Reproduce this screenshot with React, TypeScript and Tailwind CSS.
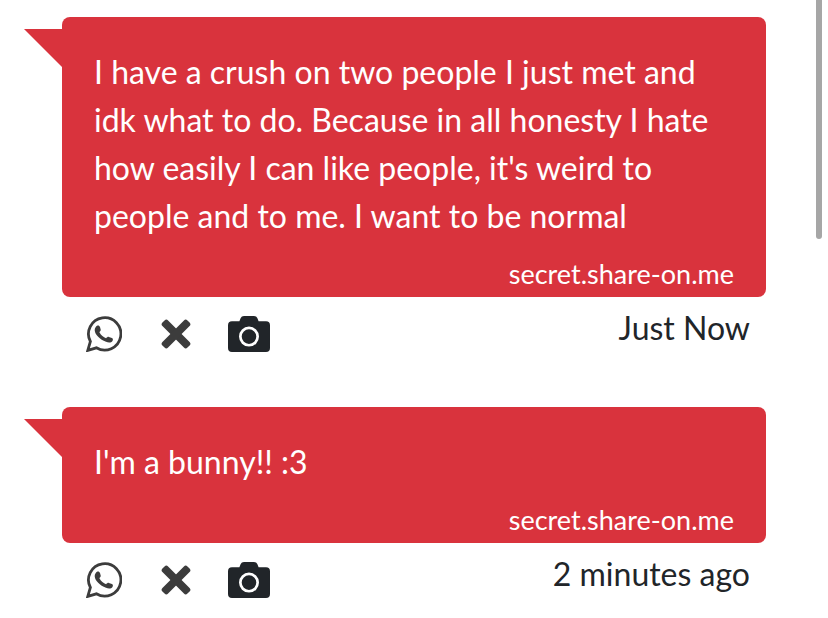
interface Message {
  id: number;
  lines: string[];
  time: string;
}

const MESSAGES: Message[] = [
  {
    id: 1,
    lines: [
      'I have a crush on two people I just met and',
      'idk what to do. Because in all honesty I hate',
      "how easily I can like people, it's weird to",
      'people and to me. I want to be normal',
    ],
    time: 'Just Now',
  },
  { id: 2, lines: ["I'm a bunny!! :3"], time: '2 minutes ago' },
];

function WhatsAppIcon() {
  return (
    <svg viewBox="0 0 36 36" className="size-9" aria-hidden="true">
      <path
        d="M1.8 34.4 4.4 25.5A16.2 16.2 0 1 1 10.4 31.8Z"
        fill="none"
        stroke="currentColor"
        strokeWidth="2.8"
      />
      <path
        d="M11 9.8c1.5-.6 2.5 0 3 1.3l.7 2.4c.3 1-.7 2-1.3 2.7 1.8 3.2 4 4.9 6.7 6 1-1 1.8-1.6 2.8-1.3l3 1.2c1.3.6 1.2 1.7.6 2.8-1.4 2-4.2 1.7-6.5.9-6-2.2-11-7-11.3-11.5 0-2 .9-3.5 2.3-4.5Z"
        fill="currentColor"
      />
    </svg>
  );
}

function CloseIcon() {
  return (
    <svg viewBox="0 0 30 30" className="size-[30px]" fill="currentColor" aria-hidden="true">
      <rect x="-2.7" y="11" width="35.4" height="8" rx="2.5" transform="rotate(45 15 15)" />
      <rect x="-2.7" y="11" width="35.4" height="8" rx="2.5" transform="rotate(-45 15 15)" />
    </svg>
  );
}

function CameraIcon() {
  return (
    <svg viewBox="0 0 42 36" className="h-9 w-[42px]" aria-hidden="true">
      <path
        fill="currentColor"
        fillRule="evenodd"
        d="M16 0h10q2.5 0 3.3 2l1.3 3.3H38q4 0 4 4V32q0 4-4 4H4q-4 0-4-4V9.3q0-4 4-4h7.4L12.7 2Q13.500 0 16 0Zm5 10.6a10 10 0 1 0 0 20 10 10 0 0 0 0-20Zm0 2.7a7.3 7.3 0 1 1 0 14.6 7.3 7.3 0 0 1 0-14.6Z"
      />
    </svg>
  );
}

function MessageCard({ message }: { message: Message }) {
  return (
    <article>
      <div className="relative rounded-lg bg-[#d9333d] px-8 pt-[31px] pb-[3px] text-white">
        <svg viewBox="0 0 38 38" className="absolute top-3 -left-[38px] size-[38px]" aria-hidden="true">
          <path d="M0 0h38v38Z" fill="#d9333d" />
        </svg>
        <p className="text-[32px] leading-[48px]">
          {message.lines.map((line) => (
            <span key={line} className="block whitespace-nowrap">
              {line}
            </span>
          ))}
        </p>
        <p className="mt-3.5 text-right text-[27px] leading-[40px]">secret.share-on.me</p>
      </div>
      <div className="flex items-start justify-between pt-[11px] pr-4 pl-6">
        <div className="flex items-center pt-2 text-[#212529]">
          <button type="button" aria-label="Share on WhatsApp" className="text-[#3c3c3c]">
            <WhatsAppIcon />
          </button>
          <button type="button" aria-label="Delete message" className="ml-[39px] text-[#3c3c3c]">
            <CloseIcon />
          </button>
          <button type="button" aria-label="Save as picture" className="ml-[37px]">
            <CameraIcon />
          </button>
        </div>
        <time className="text-[32px] leading-10 text-[#212529]">{message.time}</time>
      </div>
    </article>
  );
}

export default function App() {
  return (
    <div className="flex bg-white font-['Lato','Open_Sans',sans-serif]">
      <main className="flex flex-1 flex-col gap-[55px] pt-[17px] pr-[50px] pl-[62px]">
        {MESSAGES.map((message) => (
          <MessageCard key={message.id} message={message} />
        ))}
      </main>
      <div className="mr-1.5 h-[239px] w-1.5 rounded-b-full bg-[#a6a6a6]" />
    </div>
  );
}
